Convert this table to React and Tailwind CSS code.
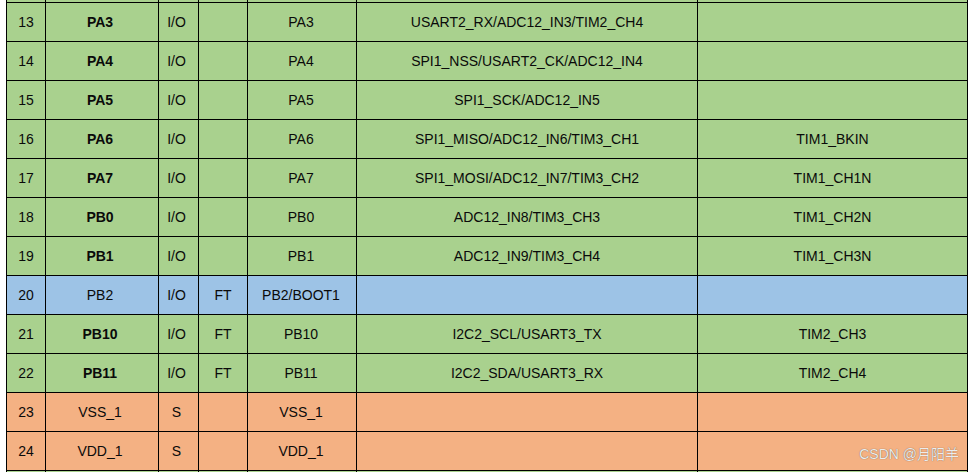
import React from 'react';

const GREEN = 'bg-[#a9d18e]';
const BLUE = 'bg-[#9dc3e6]';
const ORANGE = 'bg-[#f4b183]';

// rows 12 and 25 only show as thin strips at the edges, so no text in them
const rows = [
    { no: '', name: '', bold: true, type: '', ft: '', main: '', alt: '', remap: '', bg: GREEN, key: 12 },
    { no: 13, name: 'PA3', bold: true, type: 'I/O', ft: '', main: 'PA3', alt: 'USART2_RX/ADC12_IN3/TIM2_CH4', remap: '', bg: GREEN },
    { no: 14, name: 'PA4', bold: true, type: 'I/O', ft: '', main: 'PA4', alt: 'SPI1_NSS/USART2_CK/ADC12_IN4', remap: '', bg: GREEN },
    { no: 15, name: 'PA5', bold: true, type: 'I/O', ft: '', main: 'PA5', alt: 'SPI1_SCK/ADC12_IN5', remap: '', bg: GREEN },
    { no: 16, name: 'PA6', bold: true, type: 'I/O', ft: '', main: 'PA6', alt: 'SPI1_MISO/ADC12_IN6/TIM3_CH1', remap: 'TIM1_BKIN', bg: GREEN },
    { no: 17, name: 'PA7', bold: true, type: 'I/O', ft: '', main: 'PA7', alt: 'SPI1_MOSI/ADC12_IN7/TIM3_CH2', remap: 'TIM1_CH1N', bg: GREEN },
    { no: 18, name: 'PB0', bold: true, type: 'I/O', ft: '', main: 'PB0', alt: 'ADC12_IN8/TIM3_CH3', remap: 'TIM1_CH2N', bg: GREEN },
    { no: 19, name: 'PB1', bold: true, type: 'I/O', ft: '', main: 'PB1', alt: 'ADC12_IN9/TIM3_CH4', remap: 'TIM1_CH3N', bg: GREEN },
    { no: 20, name: 'PB2', bold: false, type: 'I/O', ft: 'FT', main: 'PB2/BOOT1', alt: '', remap: '', bg: BLUE },
    { no: 21, name: 'PB10', bold: true, type: 'I/O', ft: 'FT', main: 'PB10', alt: 'I2C2_SCL/USART3_TX', remap: 'TIM2_CH3', bg: GREEN },
    { no: 22, name: 'PB11', bold: true, type: 'I/O', ft: 'FT', main: 'PB11', alt: 'I2C2_SDA/USART3_RX', remap: 'TIM2_CH4', bg: GREEN },
    { no: 23, name: 'VSS_1', bold: false, type: 'S', ft: '', main: 'VSS_1', alt: '', remap: '', bg: ORANGE },
    { no: 24, name: 'VDD_1', bold: false, type: 'S', ft: '', main: 'VDD_1', alt: '', remap: '', bg: ORANGE },
    { no: '', name: '', bold: true, type: '', ft: '', main: '', alt: '', remap: '', bg: GREEN, key: 25 },
];

const cell = 'h-[39px] flex items-center justify-center border-r border-b border-black';

const App = () => {
    return (
        <div className="relative h-[472px] w-[974px] overflow-hidden bg-white font-['Liberation_Sans',Arial,sans-serif] text-[14px] text-[#0a0a0a]">
            {/* Pin table, first row is cut off by the top edge */}
            <div className="ml-[6px] -mt-[36px] w-[962px] border-l border-black grid grid-cols-[39px_113px_40px_49px_109px_341px_270px]">
                {rows.map((r) => (
                    <React.Fragment key={r.key || r.no}>
                        <div className={`${cell} ${r.bg} pt-[1px]`}>{r.no}</div>
                        <div className={`${cell} ${r.bg} pt-[1px] pr-[4px] ${r.bold ? 'font-bold' : ''}`}>{r.name}</div>
                        <div className={`${cell} ${r.bg} pt-[1px] pr-[4px]`}>{r.type}</div>
                        <div className={`${cell} ${r.bg} pt-[1px]`}>{r.ft}</div>
                        <div className={`${cell} ${r.bg} pt-[1px] pr-[2px]`}>{r.main}</div>
                        <div className={`${cell} ${r.bg} pt-[1px]`}>{r.alt}</div>
                        <div className={`${cell} ${r.bg} pt-[1px]`}>{r.remap}</div>
                    </React.Fragment>
                ))}
            </div>

            {/* Watermark */}
            <div className="absolute right-[15px] top-[444px] text-[14px] leading-[20px] text-[#ececec] font-['Liberation_Sans','Noto_Sans_CJK_SC',sans-serif] [text-shadow:0_0_1px_rgba(0,0,0,0.6)] whitespace-nowrap">
                CSDN @月阳羊
            </div>
        </div>
    );
};

export default App;
